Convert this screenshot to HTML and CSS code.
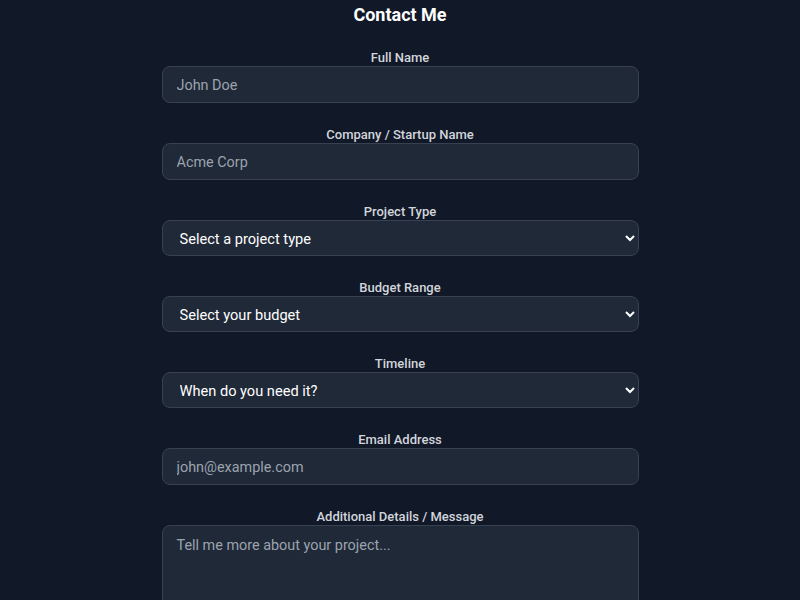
FILE: index.html
```html
<!DOCTYPE html>
<html lang="en">
<head>
<meta charset="utf-8">
<title>Contact Me</title>
<link rel="stylesheet" href="styles.css">
</head>
<body>
<form class="contact">
  <h2 class="title">Contact Me</h2>
  <div class="field">
    <label class="label" for="name">Full Name</label>
    <input class="control" id="name" type="text" placeholder="John Doe">
  </div>
  <div class="field">
    <label class="label" for="company">Company / Startup Name</label>
    <input class="control" id="company" type="text" placeholder="Acme Corp">
  </div>
  <div class="field">
    <label class="label" for="ptype">Project Type</label>
    <select class="control select" id="ptype">
      <option>Select a project type</option>
    </select>
  </div>
  <div class="field">
    <label class="label" for="budget">Budget Range</label>
    <select class="control select" id="budget">
      <option>Select your budget</option>
    </select>
  </div>
  <div class="field">
    <label class="label" for="timeline">Timeline</label>
    <select class="control select" id="timeline">
      <option>When do you need it?</option>
    </select>
  </div>
  <div class="field">
    <label class="label" for="email">Email Address</label>
    <input class="control" id="email" type="email" placeholder="john@example.com">
  </div>
  <div class="field">
    <label class="label" for="msg">Additional Details / Message</label>
    <textarea class="control area" id="msg" placeholder="Tell me more about your project..."></textarea>
  </div>
</form>
</body>
</html>
```

FILE: styles.css
```css
html, body {
  margin: 0;
  padding: 0;
  background: #111827;
}
body {
  font-family: "Roboto", "Lato", sans-serif;
  color: #d1d5db;
}
.contact {
  width: 477px;
  margin: 0 auto;
  display: flex;
  flex-direction: column;
}
.title {
  margin: 1px 0 19px;
  font-size: 18px;
  line-height: 28px;
  font-weight: 700;
  color: #ffffff;
  text-align: center;
}
.field {
  display: flex;
  flex-direction: column;
  margin-bottom: 22px;
}
.label {
  display: block;
  text-align: center;
  font-size: 13px;
  line-height: 17px;
  padding-top: 1px;
  font-weight: 500;
  color: #d1d5db;
  margin-bottom: 0;
}
.control {
  box-sizing: border-box;
  width: 100%;
  height: 37px;
  margin: 0;
  padding: 1px 14px 0;
  background: #1f2937;
  border: 1px solid #374151;
  border-radius: 8px;
  color: #ffffff;
  font-family: inherit;
  font-size: 14.4px;
  outline: none;
}
.control::placeholder {
  color: #9ca3af;
}
.select {
  height: 36px;
  padding: 1px 8px 0 13px;
  color-scheme: dark;
  color: #ffffff;
  font-size: 14.6px;
}
.area {
  height: 120px;
  padding: 11px 14px 8px;
  resize: vertical;
}
```
